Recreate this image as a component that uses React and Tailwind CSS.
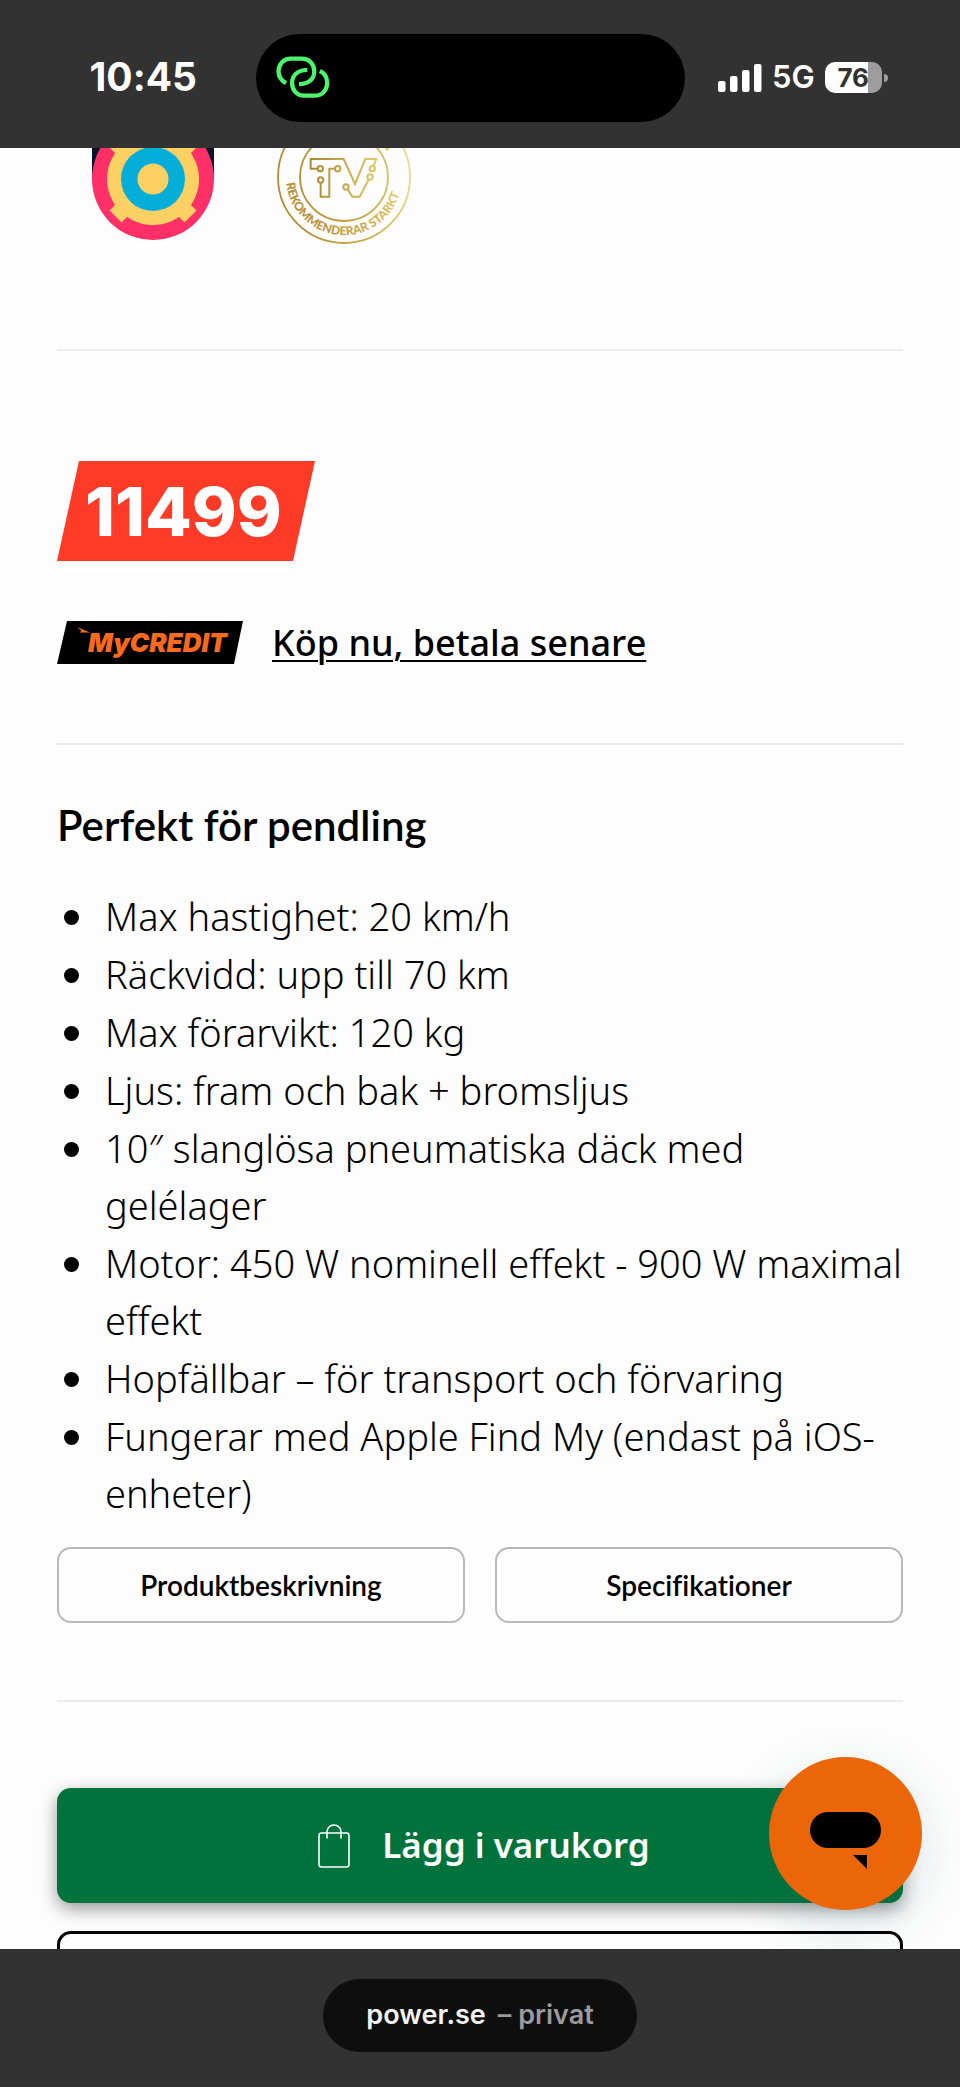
const FEATURES = [
  "Max hastighet: 20 km/h",
  "Räckvidd: upp till 70 km",
  "Max förarvikt: 120 kg",
  "Ljus: fram och bak + bromsljus",
  "10″ slanglösa pneumatiska däck med gelélager",
  "Motor: 450 W nominell effekt - 900 W maximal effekt",
  "Hopfällbar – för transport och förvaring",
  "Fungerar med Apple Find My (endast på iOS-enheter)",
];

function LinkIcon() {
  return (
    <svg viewBox="34 32 162 130" className="h-[43px] w-[54px]" fill="none" stroke="#4bf56c" strokeWidth="13" aria-hidden="true">
      <path d="M64 114C48 106 41 93 41 78C41 56 57 40 78 40H112C133 40 149 56 149 78C149 101 134 116 103 117" />
      <path d="M166 77C181 85 188 97 188 113C188 137 172 152 150 152H118C97 152 82 136 82 114C82 92 97 75 128 74" />
    </svg>
  );
}

function SignalIcon() {
  return (
    <svg viewBox="0 0 44 28" className="h-7 w-11" fill="#fff" aria-hidden="true">
      <rect x="0" y="17" width="7.5" height="11" rx="2" />
      <rect x="12" y="12" width="7.5" height="16" rx="2" />
      <rect x="24" y="6" width="7.5" height="22" rx="2" />
      <rect x="36" y="0" width="7.5" height="28" rx="2" />
    </svg>
  );
}

function StatusBar() {
  return (
    <header className="flex h-[148px] shrink-0 items-center bg-[#323232] pt-[7px] font-[Inter,sans-serif] text-white">
      <div className="flex w-64 justify-end pr-[59px] text-[39px] font-bold">10:45</div>
      <div className="flex h-[88px] flex-1 items-center rounded-full bg-black pl-5">
        <LinkIcon />
      </div>
      <div className="flex w-[275px] items-center gap-[10px] pl-[33px]">
        <SignalIcon />
        <span className="text-[31px] font-semibold">5G</span>
        <div className="flex items-center gap-[2px]">
          <div className="flex h-[31px] w-[57px] items-center justify-center rounded-[10px] bg-linear-to-r from-white from-76% to-[#9d9d9d] to-76% text-[26px] font-bold text-[#323232]">
            76
          </div>
          <div className="h-2 w-1 rounded-r-full bg-[#9d9d9d]" />
        </div>
      </div>
    </header>
  );
}

function TargetBadge() {
  return (
    <svg viewBox="0 0 122 93" className="h-[93px] w-[122px]" aria-hidden="true">
      <rect width="122" height="31" fill="#06142e" />
      <circle cx="61" cy="31" r="61" fill="#ff3068" />
      <g fill="#fdd063">
        <circle cx="61" cy="31" r="46" />
        <rect x="52.5" y="31" width="17" height="53" transform="rotate(45 61 31)" />
        <rect x="52.5" y="31" width="17" height="53" transform="rotate(-45 61 31)" />
        <rect x="52.5" y="31" width="17" height="53" transform="rotate(135 61 31)" />
        <rect x="52.5" y="31" width="17" height="53" transform="rotate(-135 61 31)" />
      </g>
      <circle cx="61" cy="31" r="32" fill="#05add9" />
      <circle cx="61" cy="31" r="15.5" fill="#fdd063" />
    </svg>
  );
}

function TvBadge() {
  return (
    <svg viewBox="0 0 136 97" className="h-[97px] w-[136px]" fill="none" stroke="url(#gold)">
      <defs>
        <linearGradient id="gold" gradientUnits="userSpaceOnUse" x1="0" y1="40" x2="136" y2="30">
          <stop offset="0" stopColor="#b48a32" />
          <stop offset="0.35" stopColor="#bf983e" />
          <stop offset="0.7" stopColor="#d0b04e" />
          <stop offset="1" stopColor="#ecdd8c" />
        </linearGradient>
        <linearGradient id="goldMark" gradientUnits="userSpaceOnUse" x1="130" y1="0" x2="340" y2="0">
          <stop offset="0" stopColor="#ad8530" />
          <stop offset="1" stopColor="#e2cb6c" />
        </linearGradient>
        <path id="badgeArc" d="M9.300 35A58 58 0 0 0 124.700 35" />
      </defs>
      <circle cx="67" cy="29" r="66" strokeWidth="1.8" />
      <circle cx="67" cy="29" r="44" strokeWidth="1.8" />
      <g transform="translate(-12 -8) scale(.3333)" strokeWidth="6" stroke="url(#goldMark)">
        <path d="M158 86H137V57H236L270 132L301 57H334L325 78" />
        <path d="M210 86H193V170H167V128" />
        <path d="M248 148L262 170H284L311 119" />
        <circle cx="166" cy="86" r="8" />
        <circle cx="218" cy="86" r="8" />
        <circle cx="167" cy="120" r="8" />
        <circle cx="322" cy="86" r="8" />
        <circle cx="243" cy="141" r="8" />
        <circle cx="315" cy="111" r="8" />
        <path d="M362 28L372 24" strokeWidth="9" />
      </g>
      <text className="font-[Lato,sans-serif] text-[12px] font-black" fill="url(#gold)" stroke="none">
        <textPath href="#badgeArc">REKOMMENDERAR STARKT</textPath>
      </text>
    </svg>
  );
}

function BagIcon() {
  return (
    <svg viewBox="0 0 32 44" className="h-11 w-8" fill="none" stroke="#fff" strokeWidth="1.6" aria-hidden="true">
      <rect x="1" y="9" width="30" height="34" rx="2.5" />
      <path d="M9 14.500V8C9 4 12 1 16 1S23 4 23 8V14.500" />
    </svg>
  );
}

function MyCreditLogo() {
  return (
    <svg viewBox="0 0 186 43" className="h-[43px] w-[186px]" role="img" aria-label="MyCREDIT">
      <polygon points="10,0 186,0 177,43 0,43" fill="#000" />
      <path d="M20 6L33 11.500H22.500L24.500 9.800Z" fill="#f96a1d" />
      <text x="31" y="31" fill="#f96a1d" className="font-[Inter,sans-serif] text-[26px] font-black italic">
        MyCREDIT
      </text>
    </svg>
  );
}

function ChatButton() {
  return (
    <button type="button" aria-label="Chatt" className="absolute right-[38px] bottom-[39px] rounded-full bg-[#eb6608] shadow-[0_16px_56px_rgba(0,80,80,0.14)]">
      <svg viewBox="0 0 153 153" className="size-[153px]" aria-hidden="true">
        <rect x="41" y="55" width="71" height="36" rx="18" />
        <polygon points="84,98 98,98 98,112" />
      </svg>
    </button>
  );
}

export default function App() {
  return (
    <div className="flex h-screen flex-col bg-[#fdfdfd] font-[Lato,sans-serif] text-black [font-variant-ligatures:none]">
      <StatusBar />
      <div className="relative min-h-0 flex-1">
        <main className="h-full overflow-hidden px-[57px]">
          <div className="flex h-[203px] gap-[63px] border-b-2 border-[#ececec] pl-[35px]">
            <TargetBadge />
            <TvBadge />
          </div>

          <section className="border-b-2 border-[#ececec] pt-[110px] pb-[79px]">
            <div className="flex h-[100px] w-[258px] items-center bg-[#ff3b28] pl-7 font-[Inter,sans-serif] text-[68px] leading-none font-extrabold text-white [clip-path:polygon(22px_0,100%_0,236px_100%,0_100%)]">
              11499
            </div>
            <div className="mt-[60px] flex h-[43px] items-center gap-[29px]">
              <MyCreditLogo />
              <a href="#mycredit" className="font-['Noto_Sans',sans-serif] text-4xl font-medium underline decoration-2 underline-offset-4">
                Köp nu, betala senare
              </a>
            </div>
          </section>

          <section className="border-b-2 border-[#ececec] pt-[50px] pb-[77px]">
            <h2 className="text-[42px] leading-[60px] font-semibold">Perfekt för pendling</h2>
            <ul className="mt-[33px] flex flex-col gap-px font-['Noto_Sans',sans-serif] font-light">
              {FEATURES.map((feature) => (
                <li key={feature} className="flex text-[38px] leading-[57px]">
                  <span className="mt-[22px] mr-[26px] ml-[7px] size-[15px] shrink-0 rounded-full bg-black" />
                  <span>{feature}</span>
                </li>
              ))}
            </ul>
            <div className="mt-[25px] grid grid-cols-2 gap-[30px]">
              <button type="button" className="h-[76px] rounded-[14px] border-2 border-[#b9b9b9] text-[28px] font-semibold">
                Produktbeskrivning
              </button>
              <button type="button" className="h-[76px] rounded-[14px] border-2 border-[#b9b9b9] text-[28px] font-semibold">
                Specifikationer
              </button>
            </div>
          </section>

          <section className="flex flex-col gap-7 pt-[86px]">
            <button
              type="button"
              className="flex h-[115px] items-center justify-center gap-8 rounded-[14px] bg-[#00733d] pl-2 font-['Noto_Sans',sans-serif] text-[35px] font-semibold text-white shadow-[0_6px_18px_rgba(0,0,0,0.4)]"
            >
              <BagIcon />
              Lägg i varukorg
            </button>
            <div className="h-[115px] rounded-[14px] border-[3px] border-black" />
          </section>
        </main>
        <ChatButton />
      </div>
      <footer className="flex h-[138px] shrink-0 items-start justify-center bg-[#323232] pt-[30px]">
        <div className="flex h-[73px] items-center gap-3 rounded-full bg-[#0e0e0e] px-[43px] font-[Inter,sans-serif] text-[27px] font-semibold text-[#f4f4f4]">
          <span>power.se</span>
          <span className="text-[#9b9b9b]">– privat</span>
        </div>
      </footer>
    </div>
  );
}
